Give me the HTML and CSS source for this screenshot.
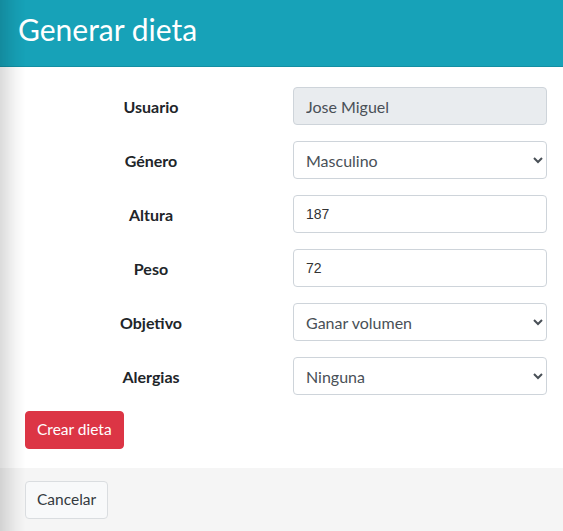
FILE: index.html
```html
<!DOCTYPE html>
<html lang="es">
<head>
<meta charset="utf-8">
<title>Generar dieta</title>
<link rel="stylesheet" href="styles.css">
</head>
<body>
<div class="shade"></div>
<div class="modal">
  <header class="modal-header">
    <h1 class="title">Generar dieta</h1>
  </header>
  <div class="modal-body">
    <form class="form">
      <label class="lbl">Usuario</label>
      <input class="ctrl ctrl-ro" type="text" value="Jose Miguel" readonly>
      <label class="lbl">Género</label>
      <select class="ctrl"><option>Masculino</option></select>
      <label class="lbl">Altura</label>
      <input class="ctrl ctrl-num" type="text" value="187">
      <label class="lbl">Peso</label>
      <input class="ctrl ctrl-num" type="text" value="72">
      <label class="lbl">Objetivo</label>
      <select class="ctrl"><option>Ganar volumen</option></select>
      <label class="lbl">Alergias</label>
      <select class="ctrl"><option>Ninguna</option></select>
    </form>
    <button class="btn btn-danger" type="button">Crear dieta</button>
  </div>
  <footer class="modal-footer">
    <button class="btn btn-light" type="button">Cancelar</button>
  </footer>
</div>
</body>
</html>
```
FILE: styles.css
```css
* { box-sizing: border-box; }
html, body { margin: 0; padding: 0; background: #f5f5f5; }
body {
  font-family: "Lato", "Noto Sans", sans-serif;
  color: #212529;
  height: 531px;
  overflow: hidden;
}
.shade {
  position: fixed;
  left: 0; top: 0; bottom: 0;
  width: 26px;
  background: linear-gradient(to right, rgba(0,0,0,0.14), rgba(0,0,0,0.04) 60%, rgba(0,0,0,0));
  pointer-events: none;
  z-index: 5;
}
.modal-header {
  background: #17a2b8;
  height: 67px;
  border-bottom: 1px solid #138fa3;
  padding: 0 18px;
  display: flex;
  align-items: center;
}
.title {
  margin: 0;
  color: #fff;
  font-weight: 400;
  font-size: 30px;
  line-height: 1;
  padding-bottom: 8px;
}
.modal-body {
  background: #fff;
  padding: 20px 16px 19px 25px;
}
.form {
  display: grid;
  grid-template-columns: 1fr 254px;
  column-gap: 18px;
  row-gap: 16px;
  align-items: center;
  margin: 0 0 16px;
}
.lbl {
  text-align: center;
  font-weight: 700;
  font-size: 16px;
  padding-left: 2px;
}
.ctrl {
  height: 38px;
  width: 100%;
  border: 1px solid #ced4da;
  border-radius: 4px;
  padding: 0 12px;
  font-family: "Lato", "Noto Sans", sans-serif;
  font-size: 16px;
  color: #495057;
  background: #fff;
}
select.ctrl { padding-left: 8px; }
.ctrl-ro { background: #e9ecef; }
.ctrl-num {
  font-family: "Liberation Sans", Arial, sans-serif;
  font-size: 14px;
  color: #333;
}
.btn {
  height: 38px;
  border-radius: 4px;
  padding: 0 11px;
  font-family: "Lato", "Noto Sans", sans-serif;
  font-size: 15.5px;
  line-height: 1;
  cursor: pointer;
}
.btn-danger {
  background: #dc3545;
  border: 1px solid #dc3545;
  color: #fff;
}
.btn-light {
  background: #f8f9fa;
  border: 1px solid #dadde0;
  color: #343a40;
}
.modal-footer {
  background: #f5f5f5;
  padding: 13px 16px 12px 25px;
}
```
